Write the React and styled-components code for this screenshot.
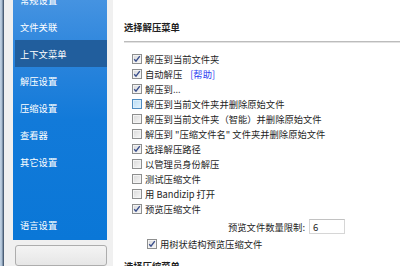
import React from "react";
import styled, { createGlobalStyle } from "styled-components";

const GlobalStyle = createGlobalStyle`
  html, body {
    margin: 0;
    padding: 0;
    background: #f0f0f0;
  }
  body {
    font-family: "Noto Sans CJK SC", "Noto Sans", "Liberation Sans", sans-serif;
  }
`;

const Window = styled.div`
  display: flex;
  width: 400px;
  height: 266px;
  overflow: hidden;
  background: #f0f0f0;
`;

const Frame = styled.div`
  width: 4px;
  flex: none;
  background: linear-gradient(90deg, #c3d3e4 0px, #a9bdd2 2px, #596d84 3px, #3f5068 4px);
`;

const LeftColumn = styled.div`
  display: flex;
  flex-direction: column;
  width: 94px;
  padding-left: 9px;
  padding-right: 6px;
  flex: none;
`;

const Sidebar = styled.nav`
  height: 254px;
  display: flex;
  flex-direction: column;
  justify-content: space-between;
  overflow: hidden;
  background: linear-gradient(180deg, #4593e1 0%, #2a84dc 25%, #127ad9 50%, #0a77d7 100%);
`;

const NavList = styled.div`
  display: flex;
  flex-direction: column;
  margin-top: -14px;
`;

const NavItem = styled.div`
  height: 27px;
  display: flex;
  align-items: center;
  margin-left: 2px;
  padding-left: 5px;
  font-size: 9.3px;
  color: #fff;
  background: ${(p) => (p.$active ? "#215e9d" : "transparent")};
`;

const BottomNav = styled.div`
  padding-bottom: 2px;
`;

const SideButton = styled.div`
  margin-top: 5px;
  height: 20px;
  margin-left: 2px;
  border: 1px solid #adadad;
  border-radius: 3px;
  background: linear-gradient(180deg, #f4f4f4, #e6e6e6);
`;

const Panel = styled.main`
  flex: 1;
  background: #fff;
  padding: 20px 0 0 11px;
  color: #1e1e1e;
  font-size: 9.3px;
`;

const SectionTitle = styled.div`
  font-weight: bold;
  line-height: 14px;
  height: 14px;
`;

const Divider = styled.div`
  margin-top: 7px;
  height: 1px;
  background: #bcbcbc;
  border-bottom: 1px solid #e2e2e2;
`;

const Options = styled.div`
  display: flex;
  flex-direction: column;
  padding-top: 8px;
  padding-left: 8px;
`;

const Row = styled.label`
  display: flex;
  align-items: center;
  height: 15.1px;
  gap: 3px;
  padding-left: ${(p) => p.$indent || 0}px;
  white-space: nowrap;
`;

const Box = styled.span`
  width: 8px;
  height: 8px;
  flex: none;
  border: 1px solid ${(p) => (p.$hover ? "#4f8cc0" : "#8e8f8f")};
  box-shadow: inset 0 0 0 1px ${(p) => (p.$hover ? "#dbeefb" : "#f4f4f4")};
  background: ${(p) =>
    p.$hover
      ? "linear-gradient(135deg, #b7dcf5, #e3f2fc)"
      : "linear-gradient(135deg, #d8d8d8, #f7f7f7)"};
  display: flex;
  align-items: center;
  justify-content: center;
`;

const HelpLink = styled.span`
  color: #2a3cf0;
  margin-left: 5px;
`;

const LimitRow = styled.div`
  display: flex;
  align-items: center;
  height: 19px;
  padding-left: 96px;
  gap: 4px;
`;

const NumberInput = styled.div`
  width: 31px;
  height: 13px;
  border: 1px solid #d6d6d6;
  border-top-color: #c2c2c2;
  padding-left: 3px;
  display: flex;
  align-items: center;
  font-size: 9.5px;
`;

const NextTitle = styled(SectionTitle)`
  margin-top: 8px;
`;

const Check = () => (
  <svg width="8" height="8" viewBox="0 0 8 8">
    <path d="M1.2 4.2 L3 6.2 L6.8 1.2" fill="none" stroke="#3a4f8c" strokeWidth="1.4" />
  </svg>
);

const Option = ({ checked, hover, indent, children }) => (
  <Row $indent={indent}>
    <Box $hover={hover}>{checked && <Check />}</Box>
    {children}
  </Row>
);

const navItems = ["常规设置", "文件关联", "上下文菜单", "解压设置", "压缩设置", "查看器", "其它设置"];

const options = [
  { text: "解压到当前文件夹", checked: true },
  { text: "自动解压", checked: true, help: true },
  { text: "解压到...", checked: true },
  { text: "解压到当前文件夹并删除原始文件", hover: true },
  { text: "解压到当前文件夹（智能）并删除原始文件" },
  { text: "解压到 \"压缩文件名\" 文件夹并删除原始文件" },
  { text: "选择解压路径", checked: true },
  { text: "以管理员身份解压" },
  { text: "测试压缩文件" },
  { text: "用 Bandizip 打开" },
  { text: "预览压缩文件", checked: true },
];

export default function App() {
  return (
    <>
      <GlobalStyle />
      <Window>
        <Frame />
        <LeftColumn>
          <Sidebar>
            <NavList>
              {navItems.map((n) => (
                <NavItem key={n} $active={n === "上下文菜单"}>
                  {n}
                </NavItem>
              ))}
            </NavList>
            <BottomNav>
              <NavItem>语言设置</NavItem>
            </BottomNav>
          </Sidebar>
          <SideButton />
        </LeftColumn>
        <Panel>
          <SectionTitle>选择解压菜单</SectionTitle>
          <Divider />
          <Options>
            {options.map((o) => (
              <Option key={o.text} checked={o.checked} hover={o.hover}>
                {o.text}
                {o.help && <HelpLink>[帮助]</HelpLink>}
              </Option>
            ))}
            <LimitRow>
              预览文件数量限制:
              <NumberInput>6</NumberInput>
            </LimitRow>
            <Option checked indent={15}>
              用树状结构预览压缩文件
            </Option>
          </Options>
          <NextTitle>选择压缩菜单</NextTitle>
        </Panel>
      </Window>
    </>
  );
}
